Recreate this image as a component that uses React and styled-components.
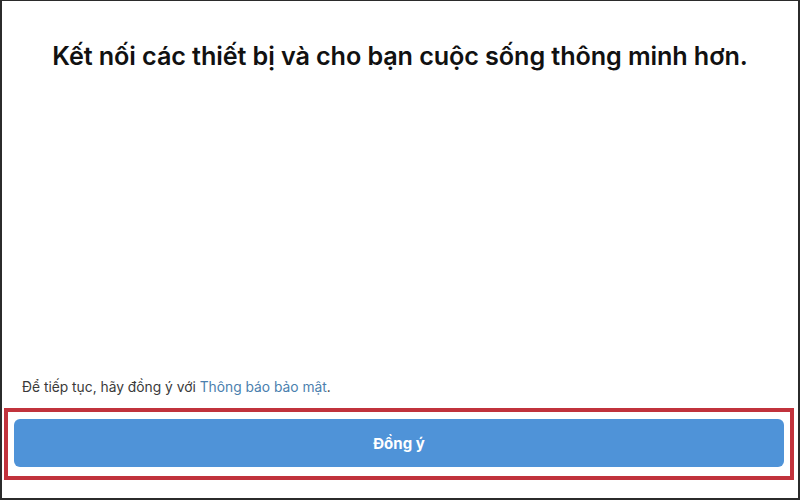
import styled, { createGlobalStyle } from "styled-components";

const Global = createGlobalStyle`
  html, body {
    margin: 0;
    padding: 0;
    background: #fff;
  }
`;

const Frame = styled.div`
  box-sizing: border-box;
  width: 800px;
  height: 500px;
  border: 2px solid #2b2b2b;
  border-top-width: 1px;
  display: flex;
  flex-direction: column;
  font-family: Inter, "Noto Sans", sans-serif;
  background: #fff;
`;

const Title = styled.h1`
  margin: 40px 0 0;
  text-align: center;
  font-size: 25.2px;
  line-height: 30px;
  font-weight: 600;
  color: #111;
  letter-spacing: -0.1px;
`;

const Spacer = styled.div`
  flex: 1;
`;

const Notice = styled.p`
  margin: 0 0 12px 20px;
  font-size: 13.8px;
  line-height: 18px;
  color: #3a3a3a;
`;

const Link = styled.a`
  color: #4b80ae;
  text-decoration: none;
`;

const Highlight = styled.div`
  margin: 0 4px 18px 2px;
  border: 4px solid #c1323c;
  padding: 7px 6px 9px;
`;

const Button = styled.button`
  display: block;
  width: 100%;
  height: 48px;
  border: none;
  border-radius: 6px;
  background: #4f93d8;
  color: #fff;
  font-family: inherit;
  font-size: 15px;
  font-weight: 700;
  cursor: pointer;
`;

export default function App() {
  return (
    <>
      <Global />
      <Frame>
        <Title>Kết nối các thiết bị và cho bạn cuộc sống thông minh hơn.</Title>
        <Spacer />
        <Notice>
          Để tiếp tục, hãy đồng ý với <Link href="#">Thông báo bảo mật</Link>.
        </Notice>
        <Highlight>
          <Button>Đồng ý</Button>
        </Highlight>
      </Frame>
    </>
  );
}
